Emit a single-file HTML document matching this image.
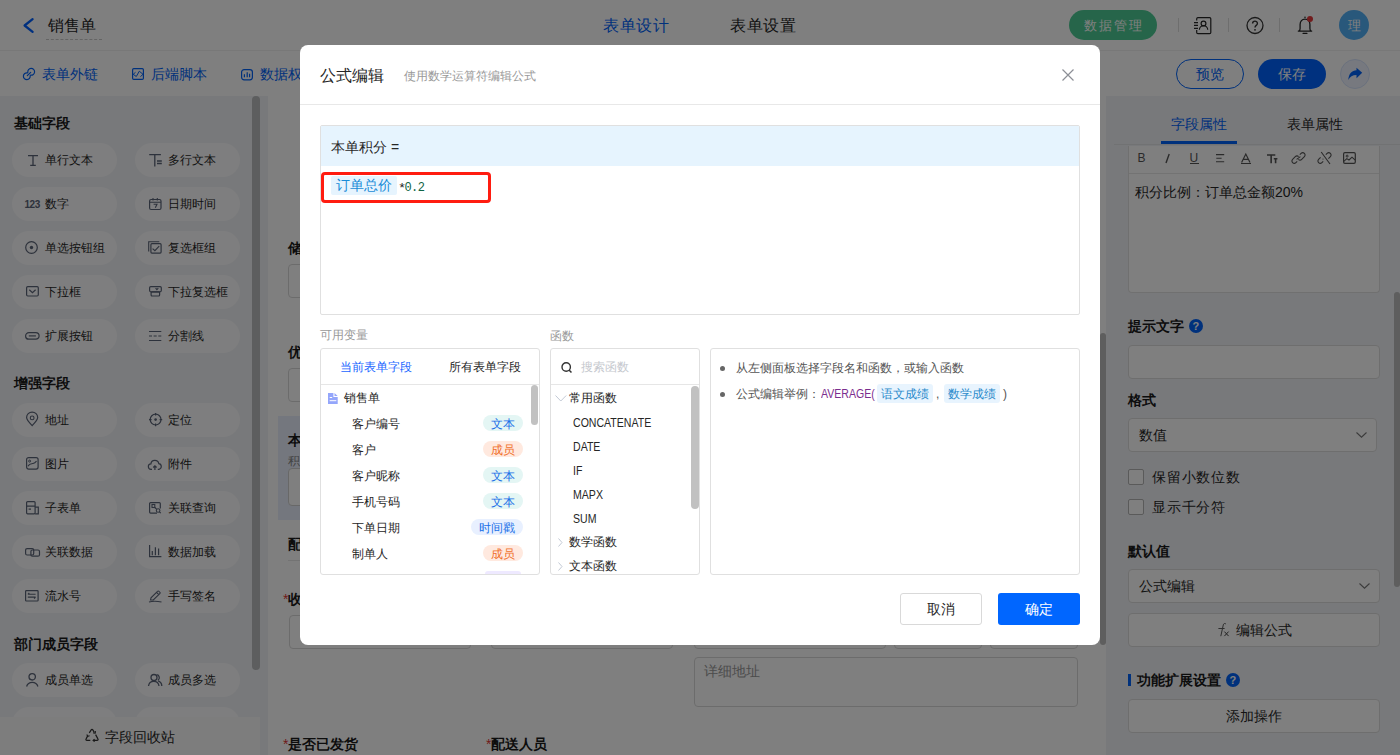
<!DOCTYPE html>
<html><head><meta charset="utf-8">
<style>
*{box-sizing:border-box;margin:0;padding:0}
html,body{width:1400px;height:755px;overflow:hidden;background:#fff}
body{position:relative;font-family:"Liberation Sans",sans-serif;color:#262626}
.a{position:absolute}
.t{position:absolute;white-space:nowrap}
svg{position:absolute;overflow:visible}
#hdr{left:0;top:0;width:1400px;height:51px;background:#fff;border-bottom:1px solid #f0f0f0}
#tb{left:0;top:51px;width:1400px;height:45px;background:#fff}
#tb .t{font-size:14px;line-height:14px;top:67px;color:#0062f8}
#side{left:0;top:96px;width:268px;height:659px;background:#f1f3f7}
#canvas{left:268px;top:96px;width:838px;height:659px;background:#fff}
#rp{left:1106px;top:96px;width:294px;height:659px;background:#f1f3f7}
.pill{position:absolute;width:105px;height:34px;border-radius:17px;background:#fdfdfe}
.pill .t{font-size:12px;line-height:12px;top:11px;left:33px;color:#262626}
.pill svg{left:13px;top:11px}
.sh{position:absolute;white-space:nowrap;font-size:14px;line-height:14px;font-weight:bold;color:#1a1a1a}
#mask{left:0;top:0;width:1400px;height:755px;background:rgba(0,0,0,.5)}
#modal{left:300px;top:45px;width:800px;height:600px;background:#fff;border-radius:8px}
.fn{transform:scaleX(.88);transform-origin:0 0}
</style></head><body>
<!-- ================= HEADER ================= -->
<div id="hdr" class="a"></div>
<svg style="left:23px;top:18px" width="11" height="15" viewBox="0 0 11 15"><path d="M9.6 1.2 L1.6 7.5 L9.6 13.8" fill="none" stroke="#0060ff" stroke-width="2.3" stroke-linecap="round" stroke-linejoin="round"/></svg>
<div class="t" style="left:48px;top:18px;font-size:16px;line-height:16px;color:#262626">销售单</div>
<div class="a" style="left:46px;top:39px;width:56px;border-top:1px dashed #c8c8c8"></div>
<div class="t" style="left:603px;top:18px;font-size:16px;line-height:16px;color:#0062f8;letter-spacing:.7px">表单设计</div>
<div class="t" style="left:730px;top:18px;font-size:16px;line-height:16px;color:#262626;letter-spacing:.7px">表单设置</div>
<div class="a" style="left:1069px;top:10px;width:88px;height:30px;border-radius:15px;background:#4ccb94"></div>
<div class="t" style="left:1084px;top:19px;font-size:13px;line-height:13px;color:#fff;letter-spacing:2px">数据管理</div>
<div class="a" style="left:1178px;top:18px;width:1px;height:14px;background:#ddd"></div>
<div class="a" style="left:1228px;top:18px;width:1px;height:14px;background:#ddd"></div>
<div class="a" style="left:1279px;top:18px;width:1px;height:14px;background:#ddd"></div>
<svg style="left:1193px;top:17px" width="19" height="17" viewBox="0 0 19 17"><path d="M3.7 3.6 V1.7 A1.2 1.2 0 0 1 4.9 .6 H16.6 A1.2 1.2 0 0 1 17.8 1.8 V15.4 A1.2 1.2 0 0 1 16.6 16.6 H4.9 A1.2 1.2 0 0 1 3.7 15.4 V13" fill="none" stroke="#262626" stroke-width="1.2"/><path d="M1 5.7H5 M1 8.4H5 M1 11.4H5" stroke="#262626" stroke-width="1.2"/><circle cx="10.5" cy="6.6" r="2.4" fill="none" stroke="#262626" stroke-width="1.2"/><path d="M6.4 12.8 A4.1 4.1 0 0 1 14.7 12.8" fill="none" stroke="#262626" stroke-width="1.2"/></svg>
<svg style="left:1246px;top:17px" width="18" height="17" viewBox="0 0 18 17"><circle cx="9" cy="8.5" r="8" fill="none" stroke="#333" stroke-width="1.3"/><path d="M6.6 6.4 C6.6 3.4 11.4 3.4 11.4 6.4 C11.4 8.3 9 8.4 9 10.4" fill="none" stroke="#333" stroke-width="1.4"/><circle cx="9" cy="12.8" r="0.9" fill="#333"/></svg>
<svg style="left:1297px;top:16px" width="16" height="19" viewBox="0 0 16 19"><path d="M1.3 15.1 H14.7 M1.8 15 C2.7 14.6 3.1 13.8 3.1 12.5 V8.6 C3.1 5.2 5 3.1 8 3.1 C11 3.1 12.9 5.2 12.9 8.6 V12.5 C12.9 13.8 13.3 14.6 14.2 15 M6.1 17.4 H9.9" fill="none" stroke="#262626" stroke-width="1.3" stroke-linecap="round"/><circle cx="8" cy="1.3" r=".8" fill="#262626"/></svg>
<div class="a" style="left:1307px;top:16px;width:6.2px;height:6.2px;border-radius:50%;background:#e3383a"></div>
<div class="a" style="left:1339px;top:10px;width:30px;height:30px;border-radius:50%;background:#52b0f6"></div>
<div class="t" style="left:1347.5px;top:19px;font-size:13px;line-height:13px;color:#fff">理</div>

<!-- ================= TOOLBAR ================= -->
<div id="tb" class="a"></div>
<svg style="left:22.6px;top:67.8px" width="12" height="12" viewBox="0 0 12 12"><path d="M4.85 4.39 A3.4 3.4 0 1 1 7.61 7.15 M7.15 7.61 A3.4 3.4 0 1 1 4.39 4.85 M4.3 7.7 L7.7 4.3" fill="none" stroke="#0062f8" stroke-width="1.2" stroke-linecap="round"/></svg>
<div class="t" style="left:42px;top:67px;font-size:14px;line-height:14px;color:#0062f8">表单外链</div>
<svg style="left:132px;top:68px" width="12" height="12" viewBox="0 0 12 12"><rect x=".6" y=".6" width="10.8" height="10.8" rx="1.2" fill="none" stroke="#0062f8" stroke-width="1.2"/><path d="M3.5 4.3 L1.2 6.3 L4.3 8.5 L7.3 3.2 L11 6.3 L8.4 8.7" fill="none" stroke="#0062f8" stroke-width="1"/></svg>
<div class="t" style="left:151px;top:67px;font-size:14px;line-height:14px;color:#0062f8">后端脚本</div>
<svg style="left:241px;top:68.8px" width="12" height="12" viewBox="0 0 12 12"><rect x=".6" y=".6" width="10.8" height="10.2" rx="2.5" fill="none" stroke="#0062f8" stroke-width="1.2"/><path d="M3.4 5.3V8.3 M6.2 3.2V8.3 M8.6 4.7V8.3" stroke="#0062f8" stroke-width="1.2"/></svg>
<div class="t" style="left:260px;top:67px;font-size:14px;line-height:14px;color:#0062f8">数据权限</div>
<div class="a" style="left:1176px;top:59px;width:68px;height:30px;border-radius:15px;border:1.3px solid #0062f8;background:#fff"></div>
<div class="t" style="left:1196px;top:67px;font-size:14px;line-height:14px;color:#0062f8">预览</div>
<div class="a" style="left:1258px;top:59px;width:68px;height:30px;border-radius:15px;background:#0062ff"></div>
<div class="t" style="left:1278px;top:67px;font-size:14px;line-height:14px;color:#fff">保存</div>
<div class="a" style="left:1340px;top:59px;width:30px;height:30px;border-radius:50%;background:#eef3ff;border:1px solid #d6e2fb"></div>
<svg style="left:1347px;top:66px" width="16" height="15" viewBox="0 0 16 15"><path d="M15.2 6.7 L9.5 1.8 V4.3 C5 4.5 1.8 7.5 1.3 14 C3 10.5 5.5 9 9.5 9 V12.2 Z" fill="#0062f8"/></svg>
<!-- ================= LEFT SIDEBAR ================= -->
<div id="side" class="a"></div>
<div class="a" style="left:252px;top:96px;width:8px;height:574px;border-radius:4px;background:#bbbcbe"></div>
<div class="sh" style="left:14px;top:116px">基础字段</div>
<div class="sh" style="left:14px;top:376px">增强字段</div>
<div class="sh" style="left:14px;top:637px">部门成员字段</div>

<div class="pill" style="left:12px;top:143px"><svg width="10" height="11" viewBox="0 0 10 11" style="left:16px;top:12px"><path d="M0 .6H10 M5 .6V10.4 M2.2 10.4H7.8" fill="none" stroke="#5b6478" stroke-width="1.3"/></svg><div class="t">单行文本</div></div>
<div class="pill" style="left:135px;top:143px"><svg width="13" height="13" viewBox="0 0 13 13" style="left:14px;top:11px"><path d="M.2 .6H11.9 M5.8 .6V12.4 M8 7H12.8 M8 9.5H12.8" fill="none" stroke="#5b6478" stroke-width="1.3"/></svg><div class="t">多行文本</div></div>
<div class="pill" style="left:12px;top:187px"><div class="t" style="left:12.4px;top:13px;font-size:10px;line-height:10px;font-weight:bold;letter-spacing:-.4px;color:#5b6478">123</div><div class="t">数字</div></div>
<div class="pill" style="left:135px;top:187px"><svg width="13" height="12" viewBox="0 0 13 12" style="left:14px;top:10.7px"><rect x=".6" y="1.5" width="11.4" height="10" rx="1.5" fill="none" stroke="#5b6478" stroke-width="1.2"/><path d="M.6 4.3H12 M4 0V2.5 M8.3 0V2.5 M4.6 6.2H8 L6.3 9.8" fill="none" stroke="#5b6478" stroke-width="1.1"/></svg><div class="t">日期时间</div></div>
<div class="pill" style="left:12px;top:231px"><svg width="13" height="13" viewBox="0 0 13 13" style="left:13px;top:9.8px"><circle cx="6.5" cy="6.5" r="5.8" fill="none" stroke="#5b6478" stroke-width="1.2"/><circle cx="6.5" cy="6.5" r="1.7" fill="#5b6478"/></svg><div class="t">单选按钮组</div></div>
<div class="pill" style="left:135px;top:231px"><svg width="14" height="13" viewBox="0 0 14 13" style="left:13px;top:10px"><path d="M.7 10.5V.7H11.3" fill="none" stroke="#5b6478" stroke-width="1.1"/><rect x="2.9" y="2.7" width="10.2" height="9.4" rx="1" fill="none" stroke="#5b6478" stroke-width="1.2"/><path d="M4.6 7.6 L6.9 9.6 L11.2 5.2" fill="none" stroke="#5b6478" stroke-width="1.2"/></svg><div class="t">复选框组</div></div>
<div class="pill" style="left:12px;top:275px"><svg width="13" height="11" viewBox="0 0 13 11" style="left:13.8px;top:11.1px"><rect x=".6" y=".6" width="11.7" height="9.4" rx="1.2" fill="none" stroke="#5b6478" stroke-width="1.2"/><path d="M3.3 3.8 L6.45 6.6 L9.6 3.8" fill="none" stroke="#5b6478" stroke-width="1.2"/></svg><div class="t">下拉框</div></div>
<div class="pill" style="left:135px;top:275px"><svg width="13" height="11" viewBox="0 0 13 11" style="left:13.8px;top:11.1px"><rect x=".6" y=".6" width="11.7" height="5.2" rx="1.2" fill="none" stroke="#5b6478" stroke-width="1.2"/><rect x="2.1" y="5.8" width="8.5" height="4.2" rx="1" fill="none" stroke="#5b6478" stroke-width="1.2"/><path d="M6.6 2.2 L7.9 3.7 L9.3 2.2" fill="none" stroke="#5b6478" stroke-width="1.1"/></svg><div class="t">下拉复选框</div></div>
<div class="pill" style="left:12px;top:319px"><svg width="15" height="8" viewBox="0 0 15 8" style="left:13px;top:12.7px"><rect x=".6" y=".6" width="13.5" height="6.6" rx="3.3" fill="none" stroke="#5b6478" stroke-width="1.2"/><path d="M3.8 3.9H10.9" fill="none" stroke="#5b6478" stroke-width="1.2"/></svg><div class="t">扩展按钮</div></div>
<div class="pill" style="left:135px;top:319px"><svg width="13" height="10" viewBox="0 0 13 10" style="left:14.4px;top:12px"><path d="M0 .5H12.3 M0 5H3 M4.6 5H7.7 M9.3 5H12.3 M0 9.5H12.3" fill="none" stroke="#5b6478" stroke-width="1.1"/></svg><div class="t">分割线</div></div>
<div class="pill" style="left:12px;top:403px"><svg width="13" height="15" viewBox="0 0 13 15" style="left:14px;top:9.4px"><path d="M6.15 13.7 C2.6 10 .6 7.6 .6 5.6 A5.55 5.55 0 0 1 11.7 5.6 C11.7 7.6 9.7 10 6.15 13.7Z" fill="none" stroke="#5b6478" stroke-width="1.2"/><circle cx="6.15" cy="5.9" r="1.9" fill="none" stroke="#5b6478" stroke-width="1.1"/></svg><div class="t">地址</div></div>
<div class="pill" style="left:135px;top:403px"><svg width="14" height="14" viewBox="0 0 14 14" style="left:13.6px;top:9.9px"><circle cx="6.6" cy="6.6" r="5.4" fill="none" stroke="#5b6478" stroke-width="1.2"/><circle cx="6.6" cy="6.6" r="1.3" fill="#5b6478"/><path d="M6.6 0V2.6 M6.6 10.6V13.2 M0 6.6H2.6 M10.6 6.6H13.2" fill="none" stroke="#5b6478" stroke-width="1.2"/></svg><div class="t">定位</div></div>
<div class="pill" style="left:12px;top:447px"><svg width="13" height="13" viewBox="0 0 13 13" style="left:14px;top:10.2px"><rect x=".6" y=".6" width="11.5" height="11.5" rx="2" fill="none" stroke="#5b6478" stroke-width="1.2"/><circle cx="3.6" cy="4.1" r="1" fill="none" stroke="#5b6478" stroke-width="1"/><path d="M2 9.3 C3 7 5 6.8 7 6.5 C8.5 6.3 9.5 5.5 10.5 4.2" fill="none" stroke="#5b6478" stroke-width="1.1"/></svg><div class="t">图片</div></div>
<div class="pill" style="left:135px;top:447px"><svg width="14" height="12" viewBox="0 0 14 12" style="left:13.2px;top:11.5px"><path d="M4 10.3 H3.2 A2.7 2.7 0 0 1 2.9 4.9 A4 4 0 0 1 10.8 4.6 A2.9 2.9 0 0 1 11 10.3 H9.8 M6.9 11V6.8 M5.2 8.5 L6.9 6.8 L8.6 8.5" fill="none" stroke="#5b6478" stroke-width="1.2"/></svg><div class="t">附件</div></div>
<div class="pill" style="left:12px;top:491px"><svg width="13" height="14" viewBox="0 0 13 14" style="left:14.2px;top:10.3px"><rect x=".6" y=".6" width="8.5" height="12.2" rx="1" fill="none" stroke="#5b6478" stroke-width="1.2"/><path d="M.6 5.2H9.1 M9.1 6.2 H12.3 V12.8 H9.1 M2.6 8.2H5" fill="none" stroke="#5b6478" stroke-width="1.2"/></svg><div class="t">子表单</div></div>
<div class="pill" style="left:135px;top:491px"><svg width="13" height="12" viewBox="0 0 13 12" style="left:14.2px;top:11px"><path d="M8 11.1 H1.6 A1 1 0 0 1 .6 10.1 V1.6 A1 1 0 0 1 1.6 .6 H10.3 A1 1 0 0 1 11.3 1.6 V6.5" fill="none" stroke="#5b6478" stroke-width="1.2"/><rect x="3" y="2.5" width="2.8" height="3" fill="none" stroke="#5b6478" stroke-width="1.1"/><circle cx="9.1" cy="8.5" r="1.8" fill="none" stroke="#5b6478" stroke-width="1.1"/><path d="M10.4 9.8 L11.8 11.2 M5.8 5.5 L7.5 7" fill="none" stroke="#5b6478" stroke-width="1.1"/></svg><div class="t">关联查询</div></div>
<div class="pill" style="left:12px;top:535px"><svg width="15" height="9" viewBox="0 0 15 9" style="left:13px;top:12.5px"><rect x=".6" y=".6" width="8.1" height="6.4" rx="1.5" fill="none" stroke="#5b6478" stroke-width="1.2"/><rect x="5.9" y="2" width="8.6" height="6.2" rx="1.5" fill="none" stroke="#5b6478" stroke-width="1.2"/></svg><div class="t">关联数据</div></div>
<div class="pill" style="left:135px;top:535px"><svg width="13" height="13" viewBox="0 0 13 13" style="left:14.2px;top:10.2px"><path d="M.6 0V11.7H12.4 M3.3 5.9V10.3 M6.4 2.3V10.3 M9.6 3.6V10.3" fill="none" stroke="#5b6478" stroke-width="1.2"/></svg><div class="t">数据加载</div></div>
<div class="pill" style="left:12px;top:579px"><svg width="14" height="12" viewBox="0 0 14 12" style="left:13.2px;top:11.1px"><rect x=".6" y=".6" width="12.5" height="10.4" rx=".8" fill="none" stroke="#5b6478" stroke-width="1.2"/><path d="M2.8 4.3H10.6 M2.8 4.3 L4.3 2.8 M2.8 7.1H10.6 M10.6 7.1 L9.1 8.6" fill="none" stroke="#5b6478" stroke-width="1.1"/></svg><div class="t">流水号</div></div>
<div class="pill" style="left:135px;top:579px"><svg width="13" height="13" viewBox="0 0 13 13" style="left:14px;top:10.5px"><path d="M1.5 10 L2 7.8 L8.5 1.3 A1 1 0 0 1 10 1.3 L10.8 2.1 A1 1 0 0 1 10.8 3.6 L4.3 10 Z M7.5 2.3 L9.8 4.6 M0 12 C4 10.8 8 11 12.5 12" fill="none" stroke="#5b6478" stroke-width="1.1"/></svg><div class="t">手写签名</div></div>
<div class="pill" style="left:12px;top:663px"><svg width="13" height="14" viewBox="0 0 13 14" style="left:14px;top:10px"><circle cx="6.2" cy="3.8" r="3.2" fill="none" stroke="#5b6478" stroke-width="1.3"/><path d="M.6 13.5 A5.9 5.9 0 0 1 11.9 13.5" fill="none" stroke="#5b6478" stroke-width="1.3"/></svg><div class="t">成员单选</div></div>
<div class="pill" style="left:135px;top:663px"><svg width="15" height="13" viewBox="0 0 15 13" style="left:12.5px;top:10.5px"><circle cx="6" cy="3.5" r="3" fill="none" stroke="#5b6478" stroke-width="1.3"/><path d="M.5 12 A5.3 5.3 0 0 1 11 12 M8.6 .7 A3 3 0 0 1 9.8 6.3 M10.2 6.9 A5.5 5.5 0 0 1 13.8 12" fill="none" stroke="#5b6478" stroke-width="1.3"/></svg><div class="t">成员多选</div></div>
<div class="pill" style="left:12px;top:707px"></div>
<div class="pill" style="left:135px;top:707px"></div>
<div class="a" style="left:0;top:717px;width:260px;height:38px;background:#fafafa"></div>
<svg style="left:85px;top:729px" width="14" height="13" viewBox="0 0 14 13"><path d="M4.3 3.9 L6.2 .9 A.9 .9 0 0 1 7.8 .9 L9.3 3.4 M10.6 5.6 L12.9 9.8 A1 1 0 0 1 12 11.4 H8.3 M5.3 11.4 H2 A1 1 0 0 1 1.1 9.8 L2.7 6.9" fill="none" stroke="#333" stroke-width="1.2"/><path d="M8.2 3.9 L10.2 4.2 L10.5 2.2 M9.6 10.1 L8.1 11.4 L9.6 12.7 M1.8 5.6 L2.7 7.3 L4.6 6.8" fill="none" stroke="#333" stroke-width="1.1"/></svg>
<div class="t" style="left:105px;top:729.5px;font-size:14px;line-height:14px;color:#262626">字段回收站</div>
<!-- ================= CANVAS ================= -->
<div id="canvas" class="a"></div>
<div class="sh" style="left:288px;top:241px;color:#1a1a1a">储值卡余额</div>
<div class="a" style="left:288px;top:264px;width:380px;height:34px;border:1px solid #d9d9d9;border-radius:4px"></div>
<div class="sh" style="left:288px;top:345px;color:#1a1a1a">优惠券</div>
<div class="a" style="left:288px;top:368px;width:380px;height:34px;border:1px solid #d9d9d9;border-radius:4px"></div>
<div class="a" style="left:278px;top:416px;width:800px;height:104px;background:#e8effc"></div>
<div class="sh" style="left:288px;top:433px;color:#1a1a1a">本单积分</div>
<div class="t" style="left:288px;top:455px;font-size:12px;line-height:12px;color:#888">积分比例：订单总金额20%</div>
<div class="a" style="left:288px;top:468px;width:380px;height:38px;border:1px solid #d0d0d0;border-radius:4px;background:#fff"></div>
<div class="sh" style="left:288px;top:537px;color:#1a1a1a">配送信息</div>
<div class="a" style="left:288px;top:560px;width:790px;height:1px;background:#e6e6e6"></div>
<div class="t" style="left:283px;top:592px;font-size:14px;line-height:14px;font-weight:bold;color:#1a1a1a"><span style="color:#e03434;font-weight:normal">*</span>收货人</div>
<div class="a" style="left:289px;top:615px;width:182px;height:34px;border:1px solid #d9d9d9;border-radius:4px"></div>
<div class="a" style="left:491px;top:615px;width:182px;height:34px;border:1px solid #d9d9d9;border-radius:4px"></div>
<div class="a" style="left:694px;top:615px;width:192px;height:34px;border:1px solid #d9d9d9;border-radius:4px"></div>
<div class="a" style="left:894px;top:615px;width:88px;height:34px;border:1px solid #d9d9d9;border-radius:4px"></div>
<div class="a" style="left:990px;top:615px;width:88px;height:34px;border:1px solid #d9d9d9;border-radius:4px"></div>
<div class="a" style="left:694px;top:657px;width:384px;height:50px;border:1px solid #d9d9d9;border-radius:4px"></div>
<div class="t" style="left:704px;top:664px;font-size:14px;line-height:14px;color:#999">详细地址</div>
<div class="t" style="left:283px;top:737px;font-size:14px;line-height:14px;font-weight:bold;color:#1a1a1a"><span style="color:#e03434;font-weight:normal">*</span>是否已发货</div>
<div class="t" style="left:486px;top:737px;font-size:14px;line-height:14px;font-weight:bold;color:#1a1a1a"><span style="color:#e03434;font-weight:normal">*</span>配送人员</div>
<div class="a" style="left:1100px;top:333px;width:6px;height:312px;border-radius:3px;background:#bcbcbc"></div>

<!-- ================= RIGHT PANEL ================= -->
<div id="rp" class="a"></div>
<div class="t" style="left:1171px;top:117px;font-size:14px;line-height:14px;color:#0062f8">字段属性</div>
<div class="t" style="left:1287px;top:117px;font-size:14px;line-height:14px;color:#262626">表单属性</div>
<div class="a" style="left:1114px;top:144px;width:286px;height:1px;background:#e3e4e6"></div>
<div class="a" style="left:1161px;top:141px;width:76px;height:3px;background:#0062f8"></div>
<div class="a" style="left:1128px;top:146px;width:252px;height:147px;border:1px solid #e0e0e0;border-top:none;border-radius:0 0 4px 4px;background:#fff"></div>
<div class="a" style="left:1129px;top:173px;width:250px;height:1px;background:#e6e6e6"></div>
<div class="t" style="left:1137.5px;top:152px;font-size:12px;line-height:12px;color:#555">B</div>
<svg style="left:1165px;top:154px" width="5" height="9" viewBox="0 0 5 9"><path d="M4.2 0 L1 9" stroke="#555" stroke-width="1.4"/></svg>
<div class="t" style="left:1189.5px;top:152px;font-size:12px;line-height:12px;color:#555">U</div>
<div class="a" style="left:1190px;top:163px;width:9px;height:1.2px;background:#555"></div>
<svg style="left:1215.7px;top:153.7px" width="9" height="9" viewBox="0 0 9 9"><path d="M0 .6H8.2 M.3 4.3H5.6 M0 7.8H8.2" stroke="#555" stroke-width="1.1"/></svg>
<svg style="left:1241px;top:154px" width="10" height="10" viewBox="0 0 10 10"><path d="M.6 8.6 L4.8 0 L9 8.6 M2.3 5.4 H7.3" fill="none" stroke="#555" stroke-width="1.2"/></svg>
<div class="a" style="left:1240.5px;top:163px;width:10px;height:1.2px;background:#555"></div>
<svg style="left:1266.7px;top:153.5px" width="11" height="10" viewBox="0 0 11 10"><path d="M0 1H8.3 M4.15 1V9.2 M6.8 4.8H10.4 M8.6 4.8V9.2" fill="none" stroke="#555" stroke-width="1.6"/></svg>
<svg style="left:1292px;top:152px" width="13" height="12" viewBox="0 0 13 12"><path d="M5.2 9.3 L3.9 10.6 A2.3 2.3 0 0 1 .6 7.3 L3.3 4.6 A2.3 2.3 0 0 1 6.6 4.6 M7.8 2.7 L9.1 1.4 A2.3 2.3 0 0 1 12.4 4.7 L9.7 7.4 A2.3 2.3 0 0 1 6.4 7.4 M4.6 7.4 L8.4 4.6" fill="none" stroke="#555" stroke-width="1.1"/></svg>
<svg style="left:1317.7px;top:152px" width="13" height="12" viewBox="0 0 13 12"><path d="M5.2 9.3 L3.9 10.6 A2.3 2.3 0 0 1 .6 7.3 L2.6 5.3 M7.8 2.7 L9.1 1.4 A2.3 2.3 0 0 1 12.4 4.7 L10.4 6.7 M3.2 0 L12 12" fill="none" stroke="#555" stroke-width="1.1"/><circle cx="5" cy="7" r=".6" fill="#555"/></svg>
<svg style="left:1343.4px;top:152px" width="13" height="12" viewBox="0 0 13 12"><rect x=".6" y=".6" width="11.7" height="10.8" rx="1.3" fill="none" stroke="#555" stroke-width="1.2"/><circle cx="4.1" cy="4.1" r="1" fill="none" stroke="#555" stroke-width="1"/><path d="M.8 9.3 L3.8 6.6 L6 8 L9 5.2 L12.2 8.2" fill="none" stroke="#555" stroke-width="1.1"/></svg>
<div class="t" style="left:1135px;top:185px;font-size:14px;line-height:14px;color:#262626">积分比例：订单总金额20%</div>

<div class="sh" style="left:1128px;top:319px;color:#1a1a1a">提示文字</div>
<div class="a" style="left:1189px;top:319px;width:14px;height:14px;border-radius:50%;background:#0062f8"></div>
<div class="t" style="left:1192.5px;top:320px;font-size:11px;line-height:12px;font-weight:bold;color:#fff">?</div>
<div class="a" style="left:1128px;top:345px;width:252px;height:34px;border:1px solid #dcdcdc;border-radius:4px;background:#fff"></div>
<div class="sh" style="left:1128px;top:393px;color:#1a1a1a">格式</div>
<div class="a" style="left:1128px;top:418px;width:249px;height:34px;border:1px solid #dcdcdc;border-radius:4px;background:#fff"></div>
<div class="t" style="left:1139px;top:428px;font-size:14px;line-height:14px;color:#262626">数值</div>
<svg style="left:1356px;top:432px" width="11" height="6" viewBox="0 0 11 6"><path d="M.5 .5 L5.5 5.2 L10.5 .5" fill="none" stroke="#777" stroke-width="1.1"/></svg>
<div class="a" style="left:1128px;top:469px;width:16px;height:16px;border:1px solid #b4b4b4;border-radius:2px;background:#fff"></div>
<div class="t" style="left:1152px;top:470px;font-size:14px;line-height:14px;color:#262626;letter-spacing:.8px">保留小数位数</div>
<div class="a" style="left:1128px;top:499px;width:16px;height:16px;border:1px solid #b4b4b4;border-radius:2px;background:#fff"></div>
<div class="t" style="left:1152px;top:500px;font-size:14px;line-height:14px;color:#262626;letter-spacing:.8px">显示千分符</div>
<div class="sh" style="left:1128px;top:544px;color:#1a1a1a">默认值</div>
<div class="a" style="left:1128px;top:569px;width:252px;height:34px;border:1px solid #dcdcdc;border-radius:4px;background:#fff"></div>
<div class="t" style="left:1139px;top:579px;font-size:14px;line-height:14px;color:#262626">公式编辑</div>
<svg style="left:1359px;top:583px" width="11" height="6" viewBox="0 0 11 6"><path d="M.5 .5 L5.5 5.2 L10.5 .5" fill="none" stroke="#777" stroke-width="1.1"/></svg>
<div class="a" style="left:1128px;top:613px;width:252px;height:34px;border:1px solid #dcdcdc;border-radius:4px;background:#fff"></div>
<svg style="left:1218px;top:622.9px" width="12" height="14" viewBox="0 0 12 14"><path d="M8 1.2 C7.2 .1 5.8 .2 5.3 1.8 L2.8 13.2 M.4 5.5 H6.6" fill="none" stroke="#5a5a5a" stroke-width="1"/><path d="M6.4 8.6 L10.6 13.1 M10.6 8.6 L6.4 13.1" fill="none" stroke="#444" stroke-width="1"/></svg>
<div class="t" style="left:1236px;top:623px;font-size:14px;line-height:14px;color:#262626">编辑公式</div>
<div class="a" style="left:1128px;top:674px;width:3px;height:12px;background:#0062f8"></div>
<div class="sh" style="left:1137px;top:673px;color:#1a1a1a">功能扩展设置</div>
<div class="a" style="left:1226px;top:673px;width:14px;height:14px;border-radius:50%;background:#0062f8"></div>
<div class="t" style="left:1229.5px;top:674px;font-size:11px;line-height:12px;font-weight:bold;color:#fff">?</div>
<div class="a" style="left:1128px;top:699px;width:252px;height:34px;border:1px solid #dcdcdc;border-radius:4px;background:#fff"></div>
<div class="t" style="left:1226px;top:709px;font-size:14px;line-height:14px;color:#262626">添加操作</div>
<div class="a" style="left:1394px;top:292px;width:6px;height:295px;border-radius:3px;background:#bcbcbc"></div>

<div id="mask" class="a"></div>
<!-- ================= MODAL ================= -->
<div id="modal" class="a"></div>
<div class="t" style="left:320px;top:68px;font-size:16px;line-height:16px;color:#262626">公式编辑</div>
<div class="t" style="left:404px;top:70px;font-size:12px;line-height:12px;color:#999">使用数学运算符编辑公式</div>
<svg style="left:1061.5px;top:69px" width="12" height="12" viewBox="0 0 12 12"><path d="M.5 .5 L11.5 11.5 M11.5 .5 L.5 11.5" stroke="#8c8f96" stroke-width="1.2"/></svg>
<div class="a" style="left:300px;top:104px;width:800px;height:1px;background:#e8e8e8"></div>

<div class="a" style="left:320px;top:125px;width:760px;height:190px;border:1px solid #e0e0e0;border-radius:2px"></div>
<div class="a" style="left:321px;top:126px;width:758px;height:40px;background:#e6f4fe;border-radius:1px 1px 0 0"></div>
<div class="t" style="left:331px;top:140px;font-size:14px;line-height:14px;color:#262626">本单积分 =</div>
<div class="a" style="left:321px;top:172px;width:170px;height:31px;border:3px solid #ff1c10;border-radius:4px"></div>
<div class="a" style="left:331px;top:176px;width:66px;height:19px;background:#e6f4fe;border-radius:2px"></div>
<div class="t" style="left:336px;top:178px;font-size:14px;line-height:14px;color:#1a8cd8">订单总价</div>
<div class="t" style="left:398px;top:183px;font-size:13.5px;line-height:12px;color:#1a1a1a;font-family:'Liberation Mono',monospace">*</div><div class="t" style="left:404.5px;top:182px;font-size:12px;line-height:12px;letter-spacing:-.6px;color:#0f6444;font-family:'Liberation Mono',monospace">0.2</div>

<div class="t" style="left:320px;top:329px;font-size:12px;line-height:12px;color:#999">可用变量</div>
<div class="a" style="left:320px;top:348px;width:220px;height:227px;border:1px solid #e0e0e0;border-radius:3px"></div>
<div class="a" style="left:321px;top:384px;width:218px;height:1px;background:#e6e6e6"></div>
<div class="t" style="left:340px;top:361px;font-size:12px;line-height:12px;color:#1a66ff">当前表单字段</div>
<div class="t" style="left:449px;top:361px;font-size:12px;line-height:12px;color:#262626">所有表单字段</div>
<div class="a" style="left:531px;top:385px;width:7px;height:40px;border-radius:4px;background:#c1c1c1"></div>
<svg style="left:328.2px;top:392.8px" width="10" height="11" viewBox="0 0 10 11"><path d="M0 0 H5.4 V4 H9.7 V11 H0 Z M6.5 0 L9.7 3.1 H6.5 Z" fill="#94a6fb"/><path d="M1.7 4.5 H4.2 M1.7 7.7 H8.3" stroke="#fff" stroke-width="1"/></svg>
<div class="t" style="left:344px;top:392px;font-size:12px;line-height:12px;color:#262626">销售单</div>
<div class="t" style="left:352px;top:418px;font-size:12px;line-height:12px;color:#262626">客户编号</div>
<div class="t" style="left:352px;top:444px;font-size:12px;line-height:12px;color:#262626">客户</div>
<div class="t" style="left:352px;top:470px;font-size:12px;line-height:12px;color:#262626">客户昵称</div>
<div class="t" style="left:352px;top:496px;font-size:12px;line-height:12px;color:#262626">手机号码</div>
<div class="t" style="left:352px;top:522px;font-size:12px;line-height:12px;color:#262626">下单日期</div>
<div class="t" style="left:352px;top:548px;font-size:12px;line-height:12px;color:#262626">制单人</div>
<div class="a" style="left:483px;top:415px;width:40px;height:16px;border-radius:8px;background:#e4f6f4"></div>
<div class="t" style="left:491px;top:418px;font-size:12px;line-height:12px;color:#2070e8">文本</div>
<div class="a" style="left:483px;top:441px;width:40px;height:16px;border-radius:8px;background:#ffe9df"></div>
<div class="t" style="left:491px;top:444px;font-size:12px;line-height:12px;color:#f0702a">成员</div>
<div class="a" style="left:483px;top:467px;width:40px;height:16px;border-radius:8px;background:#e4f6f4"></div>
<div class="t" style="left:491px;top:470px;font-size:12px;line-height:12px;color:#2070e8">文本</div>
<div class="a" style="left:483px;top:493px;width:40px;height:16px;border-radius:8px;background:#e4f6f4"></div>
<div class="t" style="left:491px;top:496px;font-size:12px;line-height:12px;color:#2070e8">文本</div>
<div class="a" style="left:471px;top:519px;width:52px;height:16px;border-radius:8px;background:#e8f0ff"></div>
<div class="t" style="left:479px;top:522px;font-size:12px;line-height:12px;color:#2070e8">时间戳</div>
<div class="a" style="left:483px;top:545px;width:40px;height:16px;border-radius:8px;background:#ffe9df"></div>
<div class="t" style="left:491px;top:548px;font-size:12px;line-height:12px;color:#f0702a">成员</div>
<div class="a" style="left:485px;top:571px;width:36px;height:3px;border-radius:8px 8px 0 0;background:#eee9ff"></div>

<div class="t" style="left:550px;top:330px;font-size:12px;line-height:12px;color:#999">函数</div>
<div class="a" style="left:550px;top:348px;width:150px;height:227px;border:1px solid #e0e0e0;border-radius:3px"></div>
<div class="a" style="left:551px;top:384px;width:148px;height:1px;background:#e6e6e6"></div>
<svg style="left:561px;top:362px" width="12" height="11" viewBox="0 0 12 11"><circle cx="5.2" cy="5" r="4.2" fill="none" stroke="#333" stroke-width="1.4"/><path d="M8 8 L10.5 10.5" stroke="#333" stroke-width="1.5"/></svg>
<div class="t" style="left:581px;top:361px;font-size:12px;line-height:12px;color:#c5c8ce">搜索函数</div>
<div class="a" style="left:691px;top:386px;width:8px;height:123px;border-radius:4px;background:#c1c1c1"></div>
<svg style="left:554.5px;top:395px" width="12" height="7" viewBox="0 0 12 7"><path d="M.5 .5 L5.8 6 L11.2 .5" fill="none" stroke="#c3cad6" stroke-width="1"/></svg>
<div class="t" style="left:569px;top:392px;font-size:12px;line-height:12px;color:#262626">常用函数</div>
<div class="t fn" style="left:573px;top:417px;font-size:12px;line-height:12px;color:#262626">CONCATENATE</div>
<div class="t fn" style="left:573px;top:441px;font-size:12px;line-height:12px;color:#262626">DATE</div>
<div class="t fn" style="left:573px;top:465px;font-size:12px;line-height:12px;color:#262626">IF</div>
<div class="t fn" style="left:573px;top:489px;font-size:12px;line-height:12px;color:#262626">MAPX</div>
<div class="t fn" style="left:573px;top:513px;font-size:12px;line-height:12px;color:#262626">SUM</div>
<svg style="left:558px;top:538px" width="5" height="9" viewBox="0 0 5 9"><path d="M.5 .5 L4 4.5 L.5 8.5" fill="none" stroke="#c3cad6" stroke-width="1"/></svg>
<div class="t" style="left:569px;top:536px;font-size:12px;line-height:12px;color:#262626">数学函数</div>
<svg style="left:558px;top:562px" width="5" height="9" viewBox="0 0 5 9"><path d="M.5 .5 L4 4.5 L.5 8.5" fill="none" stroke="#c3cad6" stroke-width="1"/></svg>
<div class="t" style="left:569px;top:560px;font-size:12px;line-height:12px;color:#262626">文本函数</div>

<div class="a" style="left:710px;top:348px;width:370px;height:227px;border:1px solid #e0e0e0;border-radius:3px"></div>
<div class="a" style="left:720px;top:366px;width:5px;height:5px;border-radius:50%;background:#666"></div>
<div class="t" style="left:736px;top:362px;font-size:12px;line-height:12px;color:#555">从左侧面板选择字段名和函数，或输入函数</div>
<div class="a" style="left:720px;top:392px;width:5px;height:5px;border-radius:50%;background:#666"></div>
<div class="t" style="left:736px;top:388px;font-size:12px;line-height:12px;color:#555">公式编辑举例：</div>
<div class="t fn" style="left:821px;top:388px;font-size:12px;line-height:12px;color:#7b2d8e">AVERAGE(</div>
<div class="a" style="left:877px;top:384px;width:56px;height:19px;background:#e8f4fe;border-radius:3px"></div>
<div class="t" style="left:881px;top:388px;font-size:12px;line-height:12px;color:#2a8acb">语文成绩</div>
<div class="t" style="left:936px;top:388px;font-size:12px;line-height:12px;color:#555">,</div>
<div class="a" style="left:944px;top:384px;width:56px;height:19px;background:#e8f4fe;border-radius:3px"></div>
<div class="t" style="left:948px;top:388px;font-size:12px;line-height:12px;color:#2a8acb">数学成绩</div>
<div class="t" style="left:1003px;top:388px;font-size:12px;line-height:12px;color:#555">)</div>

<div class="a" style="left:900px;top:593px;width:82px;height:32px;border:1px solid #d9d9d9;border-radius:3px;background:#fff"></div>
<div class="t" style="left:927px;top:602px;font-size:14px;line-height:14px;color:#262626">取消</div>
<div class="a" style="left:998px;top:593px;width:82px;height:32px;border-radius:3px;background:#0066ff"></div>
<div class="t" style="left:1025px;top:602px;font-size:14px;line-height:14px;color:#fff">确定</div>
</body></html>
